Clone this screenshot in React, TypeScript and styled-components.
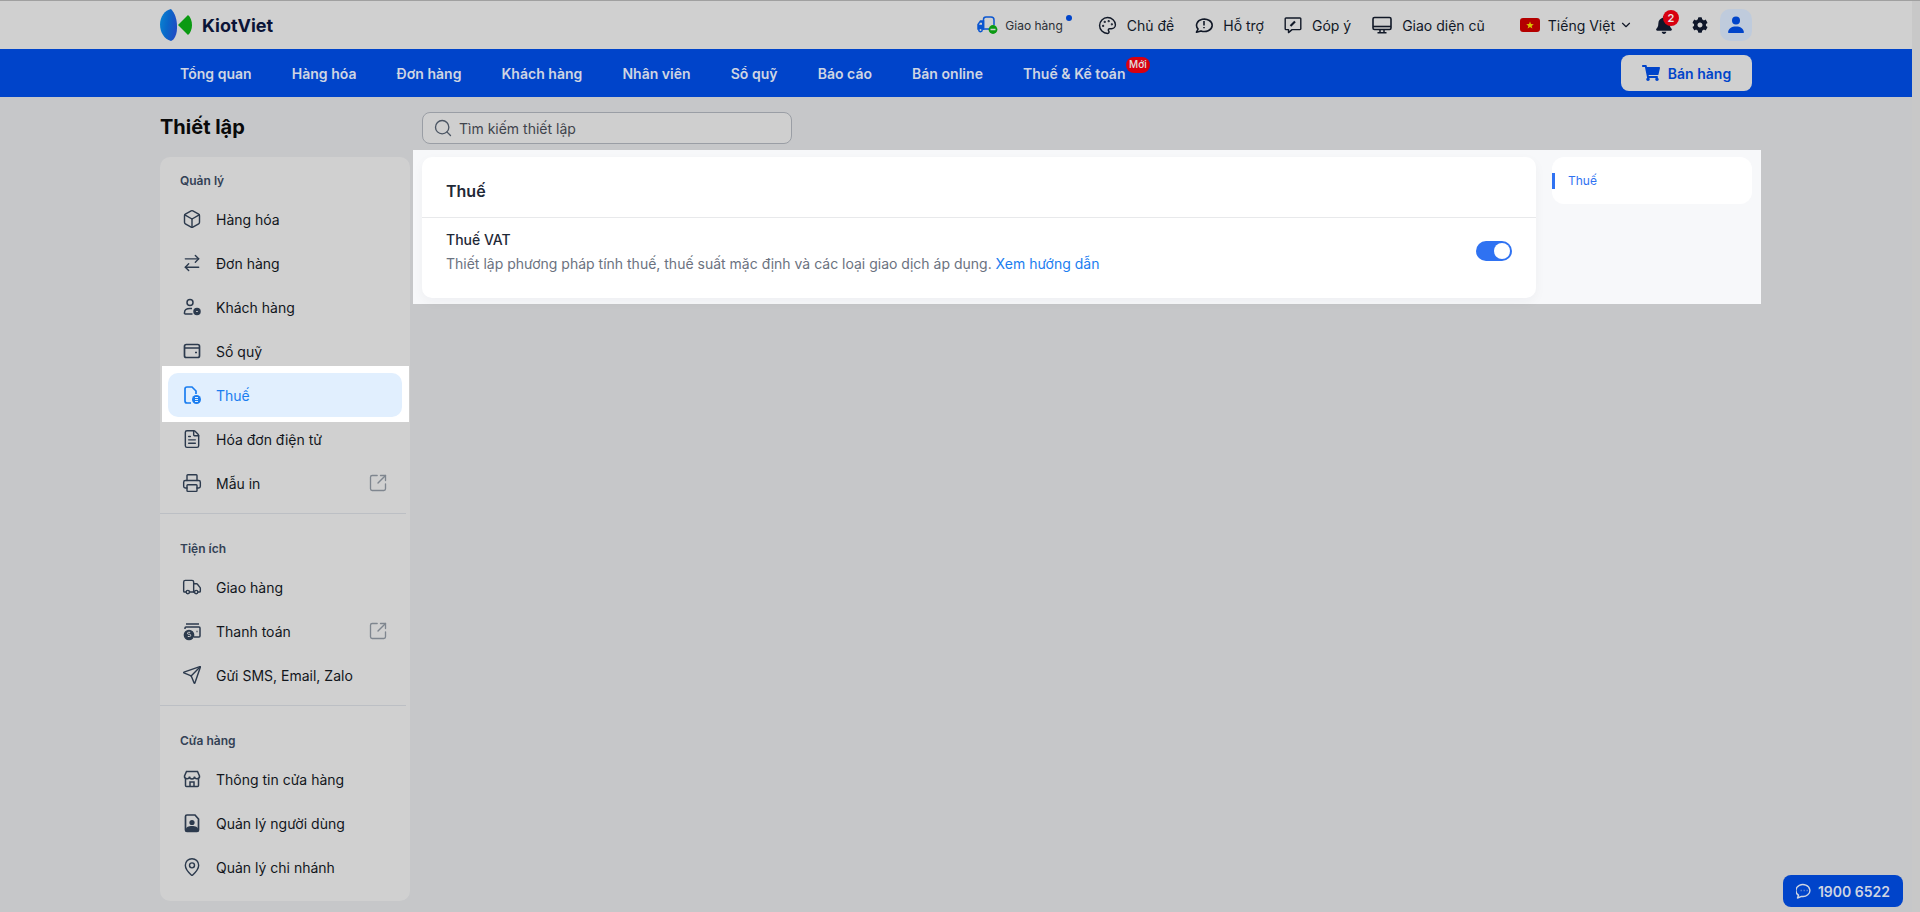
import React from "react";
import styled, { createGlobalStyle } from "styled-components";
import {
  Box, ArrowRightLeft, FileText, Printer, SquareArrowOutUpRight, Truck, Send, MapPin, Search, ChevronDown, Palette,
} from "lucide-react";
import { FaBell, FaCog, FaShoppingCart } from "react-icons/fa";

const Global = createGlobalStyle`
  html, body { margin: 0; padding: 0; height: 100%; overflow: hidden; background: #c6c7c9; }
  body { font-family: Inter, "Noto Sans", sans-serif; color: #0f172a; }
  #root { height: 100%; }
  * { box-sizing: border-box; }
`;

const Shell = styled.div`
  display: flex;
  height: 912px;
  border-top: 1px solid #a0a0a0;
`;
const Page = styled.div`
  flex: 1;
  min-width: 0;
`;
const ScrollTrack = styled.div`
  width: 8px;
  background: #c8c8c8;
`;
const TopBar = styled.header`
  height: 48px;
  background: #d0d0d0;
  display: flex;
  align-items: center;
  padding: 0 160px;
`;
const Logo = styled.div`
  display: flex;
  align-items: center;
  gap: 9px;
`;
const LogoWord = styled.span`
  font-size: 18px;
  font-weight: 700;
  color: #0b1437;
`;
const TopActions = styled.div`
  margin-left: auto;
  display: flex;
  align-items: center;
`;
const TopLink = styled.div<{ $gap: number; $ml: number }>`
  display: flex;
  align-items: center;
  gap: ${(p) => p.$gap}px;
  margin-left: ${(p) => p.$ml}px;
  font-size: 14px;
  color: #111827;
  white-space: nowrap;
`;
const SmallLabel = styled.span`
  position: relative;
  font-size: 12px;
  color: #2b2f36;
`;
const Dot = styled.i`
  position: absolute;
  right: -9px;
  top: -3px;
  width: 6px;
  height: 6px;
  border-radius: 50%;
  background: #0044ca;
`;
const TightChevron = styled.span`
  display: flex;
  margin-left: -4px;
`;
const BellWrap = styled.div`
  position: relative;
  margin-left: 21px;
  width: 20px;
  height: 20px;
  color: #0f172a;
  display: flex;
  align-items: center;
  justify-content: center;
`;
const Badge = styled.span`
  position: absolute;
  left: 9px;
  top: -5px;
  width: 16px;
  height: 16px;
  border-radius: 50%;
  background: #d80010;
  color: #e6e6e6;
  font-size: 11px;
  font-weight: 600;
  display: flex;
  align-items: center;
  justify-content: center;
`;
const GearWrap = styled.div`
  margin-left: 18px;
  display: flex;
  color: #0f172a;
`;
const Avatar = styled.div`
  margin-left: 12px;
  width: 32px;
  height: 32px;
  border-radius: 10px;
  background: #bfcbdc;
  display: flex;
  align-items: center;
  justify-content: center;
`;
const NavBar = styled.nav`
  height: 48px;
  background: #0044ca;
  display: flex;
  align-items: center;
  padding: 0 160px 0 180px;
`;
const NavItem = styled.div`
  position: relative;
  margin-right: 40px;
  font-size: 14px;
  font-weight: 600;
  letter-spacing: 0.03px;
  color: #cfd5e2;
  white-space: nowrap;
`;
const NewTag = styled.span`
  position: absolute;
  left: 103px;
  top: -8px;
  width: 24px;
  height: 16px;
  border-radius: 8px;
  background: #d80010;
  color: #e0e0e0;
  font-size: 10px;
  font-weight: 500;
  line-height: 15px;
  text-align: center;
`;
const SellButton = styled.button`
  margin-left: auto;
  width: 131px;
  height: 36px;
  border: 0;
  border-radius: 8px;
  background: #d0d0d0;
  color: #0044ca;
  font: 600 14px Inter, sans-serif;
  display: flex;
  align-items: center;
  justify-content: center;
  gap: 8px;
`;
const Body = styled.div`
  display: grid;
  grid-template-columns: 250px 1348px;
  column-gap: 3px;
  padding-left: 160px;
`;
const LeftColumn = styled.div``;
const PageTitle = styled.h1`
  margin: 0;
  height: 60px;
  font-size: 20px;
  font-weight: 700;
  line-height: 60px;
  color: #0a0a0a;
`;
const Sidebar = styled.aside`
  background: #d0d0d0;
  border-radius: 10px;
  padding: 14px 0 12px;
  height: 744px;
`;
const GroupLabel = styled.div`
  height: 20px;
  margin: 0 0 6px 20px;
  font-size: 12px;
  font-weight: 600;
  line-height: 20px;
  color: #334155;
`;
const Divider = styled.div`
  height: 1px;
  margin: 8px 4px 25px 0;
  background: #bcbfc4;
`;
const Row = styled.div<{ $active?: boolean }>`
  height: 44px;
  margin: 0 8px;
  padding: 0 14px 0 14px;
  display: flex;
  align-items: center;
  gap: 14px;
  border-radius: 10px;
  font-size: 14px;
  color: ${(p) => (p.$active ? "#1a7df0" : "#12161c")};
  background: ${(p) => (p.$active ? "#e1effe" : "transparent")};
  & > svg:first-child { color: ${(p) => (p.$active ? "#1a7df0" : "#2c3a4d")}; flex: none; }
`;
const External = styled.span`
  margin-left: auto;
  display: flex;
  color: #7f868f;
`;
const Spotlight = styled.div`
  position: relative;
  margin: -7px 1px -5px 2px;
  padding: 7px 0 5px;
  background: #fff;
  & > div { margin: 0 7px 0 6px; }
`;
const MainColumn = styled.div`
  min-width: 0;
`;
const SearchBox = styled.div`
  margin: 15px 0 6px 9px;
  width: 370px;
  height: 32px;
  border: 1px solid #9a9ea5;
  border-radius: 8px;
  background: #cfcfcf;
  display: flex;
  align-items: center;
  gap: 6px;
  padding: 0 10px;
  font-size: 14px;
  color: #3f444c;
`;
const Content = styled.section`
  background: #f7f8fa;
  padding: 7px 9px 6px;
  display: flex;
  align-items: flex-start;
  gap: 16px;
`;
const Card = styled.div`
  width: 1114px;
  height: 141px;
  background: #fff;
  border-radius: 10px;
  box-shadow: 0 4px 12px rgba(20, 30, 50, 0.04);
`;
const CardHeader = styled.div`
  height: 61px;
  padding: 8px 24px 0;
  border-bottom: 1px solid #e8e9eb;
  display: flex;
  align-items: center;
  font-size: 16px;
  font-weight: 600;
  color: #1f2937;
`;
const Setting = styled.div`
  padding: 12px 24px 0;
  display: flex;
  align-items: center;
  justify-content: space-between;
`;
const SettingName = styled.div`
  font-size: 14px;
  font-weight: 500;
  line-height: 20px;
  color: #1f2937;
`;
const SettingHint = styled.div`
  margin-top: 4px;
  font-size: 14px;
  line-height: 20px;
  color: #6b7280;
`;
const GuideLink = styled.span`
  color: #1a7df0;
`;
const Toggle = styled.div`
  margin-top: -2px;
  width: 36px;
  height: 20px;
  border-radius: 10px;
  background: #2f72f2;
  padding: 2px;
  display: flex;
  justify-content: flex-end;
  &::after {
    content: "";
    width: 16px;
    height: 16px;
    border-radius: 50%;
    background: #fff;
  }
`;
const Rail = styled.div`
  position: relative;
  width: 200px;
  height: 47px;
  border-radius: 12px;
  background: #fff;
  padding-left: 16px;
  font-size: 12px;
  line-height: 47px;
  color: #2f72f2;
  &::before {
    content: "";
    position: absolute;
    left: 0;
    top: 16px;
    width: 3px;
    height: 16px;
    background: #2f72f2;
  }
`;
const Hotline = styled.div`
  position: fixed;
  left: 1783px;
  top: 875px;
  width: 120px;
  height: 32px;
  border-radius: 8px;
  background: #0044ca;
  color: #cfd5e2;
  font-size: 14px;
  font-weight: 600;
  display: flex;
  align-items: center;
  justify-content: center;
  gap: 6px;
`;

const S = 1.7;
const LogoMark = () => (
  <svg width="33" height="32" viewBox="0 0 33 32">
    <defs>
      <linearGradient id="kvb" x1="0" x2="1" y1="0" y2="0.3">
        <stop offset="0" stopColor="#0a86d2" />
        <stop offset="0.55" stopColor="#0a66c8" />
        <stop offset="1" stopColor="#1f4fc4" />
      </linearGradient>
    </defs>
    <path d="M11 0C5 1 0 8 0 15.500 0 23 4 30 11 32c2-1 3-2 4-4 2-4 2-7 2-11 0-6-2-13-6-17z" fill="url(#kvb)" />
    <path d="M18 16 28 6c2.500 2 4 6 4 10s-1.500 8-4 10z" fill="#0b9a12" />
  </svg>
);
const WalletIcon = () => (
  <svg width="20" height="20" viewBox="0 0 20 20" fill="none" stroke="currentColor" strokeWidth="1.7">
    <rect x="2.500" y="3.500" width="15" height="13" rx="1.800" />
    <path d="M2.500 7h15M13 11.500h2" />
  </svg>
);
const CustomerIcon = () => (
  <svg width="20" height="20" viewBox="0 0 20 20" fill="none" stroke="currentColor" strokeWidth="1.5">
    <circle cx="8" cy="5.500" r="3" />
    <path d="M2.500 17v-1.500c0-2.500 2-4 5.500-4h2M2.500 17h8" />
    <circle cx="15" cy="14.500" r="3" fill="currentColor" />
    <path d="M14.200 14.500h1.600" stroke="#d0d0d0" strokeWidth="1" />
  </svg>
);
const TaxIcon = () => (
  <svg width="20" height="20" viewBox="0 0 20 20" fill="none" stroke="currentColor" strokeWidth="1.7">
    <path d="M9 18H5a2 2 0 0 1-2-2V4a2 2 0 0 1 2-2h5l4 4v3" />
    <circle cx="14.500" cy="14.500" r="4.500" fill="currentColor" stroke="none" />
    <path d="M13 12.500h3M13 14.500h3M13 16.500h3" stroke="#e1effe" strokeWidth="1" />
  </svg>
);
const PayIcon = () => (
  <svg width="20" height="20" viewBox="0 0 20 20" fill="none" stroke="currentColor" strokeWidth="1.500">
    <path d="M4 3h13M3 8V7a1 1 0 0 1 1-1h13a1 1 0 0 1 1 1v8a1 1 0 0 1-1 1h-5" />
    <circle cx="7" cy="14" r="4.600" fill="currentColor" />
    <path d="M5.800 15.500h1.800a1 1 0 0 0 0-2.200H6.500a1 1 0 0 1 0-2h1.700" stroke="#d0d0d0" strokeWidth="1" />
    <path d="M14.500 10.500h1" />
  </svg>
);
const StoreIcon = () => (
  <svg width="20" height="20" viewBox="0 0 20 20" fill="none" stroke="currentColor" strokeWidth="1.500">
    <path d="M4.500 2.500h11l2 4.500a2.500 2.500 0 0 1-5 .5 2.500 2.500 0 0 1-5 0 2.500 2.500 0 0 1-5-.5z" />
    <path d="M3.500 10v6.500a1 1 0 0 0 1 1h11a1 1 0 0 0 1-1V10M8 17.500V13h4v4.500" />
  </svg>
);
const UserFileIcon = () => (
  <svg width="20" height="20" viewBox="0 0 20 20">
    <path d="M5 2h8l3.500 4v11a1.500 1.500 0 0 1-1.500 1.500H5A1.500 1.500 0 0 1 3.500 17V3.500A1.500 1.500 0 0 1 5 2z" fill="none" stroke="currentColor" strokeWidth="1.700" />
    <circle cx="10" cy="9.500" r="2.600" fill="currentColor" />
    <path d="M4 18v-2c0-2 2.500-3 6-3s6 1 6 3v2z" fill="currentColor" />
  </svg>
);
const DeliveryIcon = () => (
  <svg width="22" height="20" viewBox="0 0 22 20" fill="none" stroke="#0b56d0" strokeWidth="1.500">
    <path d="M7.500 13V4.500A2.500 2.500 0 0 1 10 2h5a3 3 0 0 1 3 3v5" />
    <path d="M7.500 6H4.500L2 9.500V14h5.500z" fill="#0b56d0" />
    <path d="M4 7.800h2v2H3z" fill="#d0d0d0" stroke="none" />
    <path d="M7 14h6" />
    <circle cx="4.500" cy="15" r="1.700" fill="#d0d0d0" />
    <circle cx="17" cy="14.500" r="4.400" fill="#0b9a12" stroke="none" />
    <path d="M14.500 14.500h5" stroke="#d0d0d0" />
  </svg>
);
const HelpIcon = () => (
  <svg width="18" height="18" viewBox="0 0 18 18" fill="none" stroke="currentColor" strokeWidth="1.600">
    <path d="M1.500 16.200l1.600-3.200A7.800 6.200 0 1 1 6 14.900z" strokeLinejoin="round" />
    <path d="M9 5v4.400M9 11v1.200" />
  </svg>
);
const FeedbackIcon = () => (
  <svg width="18" height="18" viewBox="0 0 18 18" fill="none" stroke="currentColor" strokeWidth="1.400">
    <path d="M2 2h14a.8.8 0 0 1 .8.8v10a.8.8 0 0 1-.8.8H8l-3.500 3v-3H2a.8.8 0 0 1-.8-.8v-10A.8.8 0 0 1 2 2z" strokeLinejoin="round" />
    <path d="M6.500 10l4.500-4.500" strokeWidth="2.200" />
  </svg>
);
const MonitorIcon = () => (
  <svg width="20" height="18" viewBox="0 0 20 18" fill="none" stroke="currentColor" strokeWidth="1.600">
    <rect x="1" y="1.500" width="18" height="12" rx="1.500" />
    <path d="M1 10.500h18" />
    <path d="M8 14v2.500M12 14v2.500M5.500 16.800h9" strokeWidth="1.500" />
  </svg>
);
const Flag = () => (
  <svg width="20" height="14" viewBox="0 0 20 14">
    <rect width="20" height="14" rx="3" fill="#b40000" />
    <path d="M10 3.400l1 2.700 2.800.1-2.200 1.700.8 2.700L10 9l-2.400 1.600.8-2.700-2.200-1.700 2.800-.1z" fill="#d8c400" />
  </svg>
);
const UserGlyph = () => (
  <svg width="16" height="18" viewBox="0 0 16 18" fill="#0044ca">
    <circle cx="8" cy="4.500" r="4" />
    <path d="M1 17c-.6 0-1-.4-.9-1C.6 12.500 3.500 10.500 8 10.500s7.400 2 7.900 5.500c.1.600-.3 1-.9 1z" />
  </svg>
);
const ChatGlyph = () => (
  <svg width="16" height="16" viewBox="0 0 16 16" fill="none" stroke="#cfd5e2" strokeWidth="1.400">
    <path d="M1.500 15l1-2.800A7 6 0 1 1 5.500 13.400z" strokeLinejoin="round" />
    <path d="M4.800 7.500h.6M7.800 7.500h.6M10.800 7.500h.6" strokeWidth="1.600" />
  </svg>
);

const ico = { size: 20, strokeWidth: S };
const open = (
  <External>
    <SquareArrowOutUpRight size={20} strokeWidth={1.6} />
  </External>
);

export default function App() {
  return (
    <>
      <Global />
      <Shell>
        <Page>
          <TopBar>
            <Logo>
              <LogoMark />
              <LogoWord>KiotViet</LogoWord>
            </Logo>
            <TopActions>
              <TopLink $gap={7} $ml={0}>
                <DeliveryIcon />
                <SmallLabel>
                  Giao hàng
                  <Dot />
                </SmallLabel>
              </TopLink>
              <TopLink $gap={10} $ml={35}>
                <Palette size={19} strokeWidth={1.8} />
                Chủ đề
              </TopLink>
              <TopLink $gap={10} $ml={21}>
                <HelpIcon />
                Hỗ trợ
              </TopLink>
              <TopLink $gap={10} $ml={20}>
                <FeedbackIcon />
                Góp ý
              </TopLink>
              <TopLink $gap={10} $ml={21}>
                <MonitorIcon />
                Giao diện cũ
              </TopLink>
              <TopLink $gap={8} $ml={35}>
                <Flag />
                Tiếng Việt
                <TightChevron>
                  <ChevronDown size={14} strokeWidth={2} />
                </TightChevron>
              </TopLink>
              <BellWrap>
                <FaBell size={18} />
                <Badge>2</Badge>
              </BellWrap>
              <GearWrap>
                <FaCog size={16} />
              </GearWrap>
              <Avatar>
                <UserGlyph />
              </Avatar>
            </TopActions>
          </TopBar>
          <NavBar>
            <NavItem>Tổng quan</NavItem>
            <NavItem>Hàng hóa</NavItem>
            <NavItem>Đơn hàng</NavItem>
            <NavItem>Khách hàng</NavItem>
            <NavItem>Nhân viên</NavItem>
            <NavItem>Sổ quỹ</NavItem>
            <NavItem>Báo cáo</NavItem>
            <NavItem>Bán online</NavItem>
            <NavItem>
              Thuế &amp; Kế toán
              <NewTag>Mới</NewTag>
            </NavItem>
            <SellButton>
              <FaShoppingCart size={18} />
              Bán hàng
            </SellButton>
          </NavBar>
          <Body>
            <LeftColumn>
              <PageTitle>Thiết lập</PageTitle>
              <Sidebar>
                <GroupLabel>Quản lý</GroupLabel>
                <Row><Box {...ico} />Hàng hóa</Row>
                <Row><ArrowRightLeft {...ico} />Đơn hàng</Row>
                <Row><CustomerIcon />Khách hàng</Row>
                <Row><WalletIcon />Sổ quỹ</Row>
                <Spotlight>
                  <Row $active><TaxIcon />Thuế</Row>
                </Spotlight>
                <Row><FileText {...ico} />Hóa đơn điện tử</Row>
                <Row><Printer {...ico} />Mẫu in{open}</Row>
                <Divider />
                <GroupLabel>Tiện ích</GroupLabel>
                <Row><Truck {...ico} />Giao hàng</Row>
                <Row><PayIcon />Thanh toán{open}</Row>
                <Row><Send {...ico} />Gửi SMS, Email, Zalo</Row>
                <Divider />
                <GroupLabel>Cửa hàng</GroupLabel>
                <Row><StoreIcon />Thông tin cửa hàng</Row>
                <Row><UserFileIcon />Quản lý người dùng</Row>
                <Row><MapPin {...ico} />Quản lý chi nhánh</Row>
              </Sidebar>
            </LeftColumn>
            <MainColumn>
              <SearchBox>
                <Search size={20} strokeWidth={1.6} color="#4b5563" />
                Tìm kiếm thiết lập
              </SearchBox>
              <Content>
                <Card>
                  <CardHeader>Thuế</CardHeader>
                  <Setting>
                    <div>
                      <SettingName>Thuế VAT</SettingName>
                      <SettingHint>
                        Thiết lập phương pháp tính thuế, thuế suất mặc định và các loại giao dịch áp dụng.{" "}
                        <GuideLink>Xem hướng dẫn</GuideLink>
                      </SettingHint>
                    </div>
                    <Toggle />
                  </Setting>
                </Card>
                <Rail>Thuế</Rail>
              </Content>
            </MainColumn>
          </Body>
        </Page>
        <ScrollTrack />
      </Shell>
      <Hotline>
        <ChatGlyph />
        1900 6522
      </Hotline>
    </>
  );
}
